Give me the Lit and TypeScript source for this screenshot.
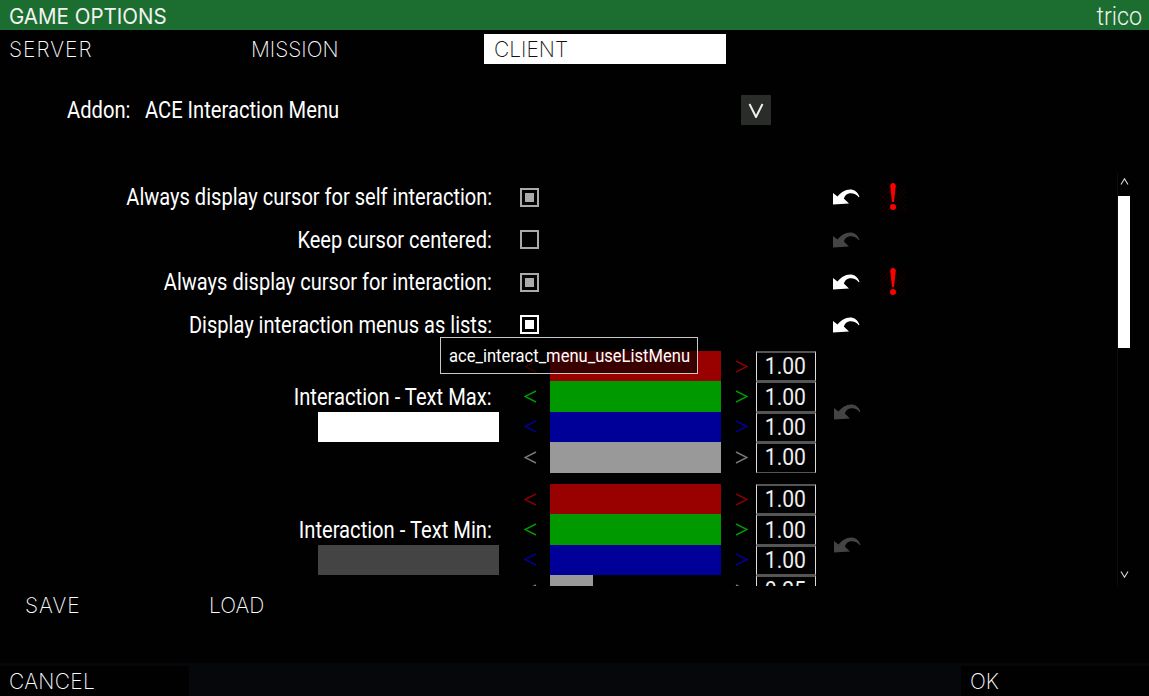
import { LitElement, html, css, svg } from "lit";
import { customElement } from "lit/decorators.js";

const undo = (off: boolean) => html`<svg class="undo ${off ? "off" : ""}" viewBox="0 0 28 16" width="28" height="16"><path d="M1 15.5 L1 4 L5.5 7.5 C9 3.5 13 0.5 18 0.5 C22.5 0.5 26 3 27.5 8 L26.8 8.3 C24.5 5 21 3.8 17.5 4.2 C14.5 4.6 12.8 7 11.8 9.5 L17 14.5 Z" /></svg>`;
const warn = svg`<svg class="warn" viewBox="-8 0 26 28" width="26" height="28"><path d="M2.2 3 C2.2 1 3.5 0 5 0 C6.5 0 7.8 1 7.8 3 L6 19 L4 19 Z" /><circle cx="5" cy="24" r="3" /></svg>`;

const CHECKS: [string, string, boolean][] = [
  ["Always display cursor for self interaction:", "on", true],
  ["Keep cursor centered:", "empty", false],
  ["Always display cursor for interaction:", "on", true],
  ["Display interaction menus as lists:", "hot", false],
];
const CHANNELS = [
  { color: "#990000", dim: "#8a0000" },
  { color: "#009900", dim: "#009900" },
  { color: "#000099", dim: "#000099" },
  { color: "#999999", dim: "#777777" },
];
const GROUPS = [
  { label: "Interaction - Text Max:", swatch: "#ffffff", values: [1, 1, 1, 1] },
  { label: "Interaction - Text Min:", swatch: "#444444", values: [1, 1, 1, 0.25] },
];

@customElement("app-root")
export class AppRoot extends LitElement {
  static styles = css`
    :host { display: block; width: 1149px; height: 696px; background: #010102; color: #fff; overflow: hidden; position: relative; font-family: "Roboto", sans-serif; }
    .page { display: flex; flex-direction: column; height: 696px; }
    .title { height: 30px; flex: none; box-sizing: border-box; padding: 2px 7px 0 9px; background: #1b6e2f; display: flex; justify-content: space-between; align-items: center; font-family: "Inter", sans-serif; font-size: 21.5px; color: #f2f2f2; font-weight: 400; }
    .title .head { display: inline-block; transform: scaleX(0.955); transform-origin: left center; }
    .title .user { font-family: "Roboto", sans-serif; font-weight: 300; font-size: 25px; display: inline-block; transform: scaleX(0.93); transform-origin: right center; }
    .tabs { display: flex; margin-top: 4px; height: 30px; flex: none; }
    .tab { width: 242px; padding: 1px 0 0 9px; box-sizing: border-box; display: flex; align-items: center; font-family: "Inter", sans-serif; font-weight: 200; font-size: 21px; color: #fff; }
    .tab.wide { letter-spacing: 1px; }
    .tab.active { background: #fff; color: #111; padding-left: 10px; }
    .addon { display: flex; align-items: center; height: 30px; margin-top: 31px; flex: none; font-size: 24px; font-weight: 400; }
    .addon .name { margin-left: 67px; width: 78px; }
    .addon .val { width: 596px; }
    .txt { display: inline-block; white-space: nowrap; transform: scaleX(0.84); transform-origin: left center; }
    .combo { width: 30px; height: 30px; background: #2a2c2a; display: flex; align-items: center; justify-content: center; }
    .main { display: flex; margin-top: 51px; height: 410px; flex: none; }
    .list { width: 1117px; overflow: hidden; flex: none; }
    .row { height: 42.5px; display: flex; align-items: center; }
    .lab { width: 492px; text-align: right; font-size: 24px; flex: none; }
    .lab .txt { transform: scaleX(0.835); transform-origin: right center; }
    .box { width: 19px; height: 19px; box-sizing: border-box; border: 2px solid #aaaaaa; margin-left: 28px; flex: none; display: flex; align-items: center; justify-content: center; }
    .box i { width: 9px; height: 9px; background: #aaaaaa; display: block; }
    .box.hot { border-color: #fff; }
    .box.hot i { background: #fff; }
    .gap { width: 321px; flex: none; display: flex; justify-content: flex-end; }
    .undo { fill: #fff; display: block; }
    .undo.off { fill: #444; }
    .warn { fill: #f00; display: block; margin-left: 20px; background: repeating-linear-gradient(135deg, #140000 0 1px, #000 1px 3px); }
    .group { display: grid; grid-template-columns: 510px 40px 171px 35px 60px 62px; grid-auto-rows: 30.4px; }
    .group.first { margin-top: 5px; }
    .group.next { margin-top: 11.4px; }
    .glabel { grid-column: 1; grid-row: 2; padding-right: 18px; text-align: right; font-size: 24px; align-self: center; line-height: 30px; }
    .glabel .txt { transform: scaleX(0.84); transform-origin: right center; }
    .swatch { grid-column: 1; grid-row: 3; margin-left: 318px; width: 181px; height: 30px; }
    .arrow { display: flex; align-items: center; justify-content: center; }
    .arrow.right { padding-left: 5px; }
    .bar { height: 100%; }
    .value { box-sizing: border-box; border-left: 1px solid #ddd; border-right: 1px solid #ddd; border-top: 2px solid #555; border-bottom: 1px solid #555; display: flex; align-items: center; justify-content: center; font-size: 24px; color: #eee; padding: 0 2px 1px 0; }
    .value span { display: inline-block; transform: scaleX(0.88); }
    .gundo { grid-column: 6; grid-row: 1 / span 4; align-self: center; justify-self: start; margin-left: 17px; }
    .scroll { width: 14px; flex: none; display: flex; flex-direction: column; border-left: 1px solid #0d0d0d; box-sizing: border-box; margin-top: -3px; height: 413px; }
    .sb { height: 16px; flex: none; display: flex; align-items: center; justify-content: center; }
    .thumb { height: 152px; width: 12px; background: #fff; margin-top: 7px; flex: none; }
    .sp { flex: 1; }
    .tail { height: 4px; flex: none; }
    .saves { display: flex; height: 37px; flex: none; margin-top: 1px; }
    .btn { font-family: "Inter", sans-serif; font-weight: 200; font-size: 21px; display: flex; align-items: center; color: #fff; }
    .save { width: 184px; padding-left: 25px; box-sizing: border-box; letter-spacing: 1px; }
    .load { width: 198px; padding-left: 25px; box-sizing: border-box; }
    .foot { margin-top: auto; height: 33px; flex: none; display: flex; background: #05070b; }
    .cancel { width: 189px; box-sizing: border-box; padding-left: 9px; background: #010102; margin-top: 3px; letter-spacing: 0.3px; }
    .sp2 { flex: 1; }
    .ok { width: 188px; box-sizing: border-box; padding-left: 9px; background: #010102; margin-top: 3px; }
    .tip { position: absolute; left: 440px; top: 337px; width: 258px; height: 37px; box-sizing: border-box; border: 1px solid #c8c8c8; background: rgba(0,0,0,0.62); display: flex; align-items: center; padding-left: 8px; font-size: 17.5px; }
    .tip span { display: inline-block; white-space: nowrap; transform: scaleX(0.946); transform-origin: left center; }
  `;

  private chevron(dir: "l" | "r", color: string) {
    const d = dir === "l" ? "M12 1 L1 6.5 L12 12" : "M1 1 L12 6.5 L1 12";
    return html`<svg width="13" height="13" viewBox="0 0 13 13" fill="none" stroke=${color} stroke-width="1.4"><path d=${d} /></svg>`;
  }

  private group(g: (typeof GROUPS)[number], i: number) {
    return html`<div class="group ${i === 0 ? "first" : "next"}">
      <div class="glabel"><span class="txt">${g.label}</span></div>
      <div class="swatch" style="background:${g.swatch}"></div>
      ${CHANNELS.map((c, r) => html`
        <div class="arrow" style="grid-column:2;grid-row:${r + 1}">${this.chevron("l", c.dim)}</div>
        <div style="grid-column:3;grid-row:${r + 1}"><div class="bar" style="background:${c.color};width:${g.values[r] * 100}%"></div></div>
        <div class="arrow right" style="grid-column:4;grid-row:${r + 1}">${this.chevron("r", c.dim)}</div>
        <div class="value" style="grid-column:5;grid-row:${r + 1}"><span>${g.values[r].toFixed(2)}</span></div>
      `)}
      <div class="gundo">${undo(true)}</div>
    </div>`;
  }

  render() {
    return html`<div class="page">
      <div class="title"><span class="head">GAME OPTIONS</span><span class="user">trico</span></div>
      <div class="tabs">
        <div class="tab wide"><span>SERVER</span></div>
        <div class="tab"><span>MISSION</span></div>
        <div class="tab active"><span>CLIENT</span></div>
      </div>
      <div class="addon">
        <div class="name"><span class="txt">Addon:</span></div>
        <div class="val"><span class="txt">ACE Interaction Menu</span></div>
        <div class="combo"><svg width="16" height="15" viewBox="0 0 16 15" fill="none" stroke="#eee" stroke-width="2"><path d="M1.5 1 L8 14 L14.5 1" /></svg></div>
      </div>
      <div class="main">
        <div class="list">
          ${CHECKS.map(([label, state, warned]) => html`<div class="row">
            <div class="lab"><span class="txt">${label}</span></div>
            <div class="box ${state}">${state === "empty" ? "" : html`<i></i>`}</div>
            <div class="gap">${undo(state === "empty")}</div>
            ${warned ? warn : ""}
          </div>`)}
          ${GROUPS.map((g, i) => this.group(g, i))}
        </div>
        <div class="scroll">
          <div class="sb"><svg width="9" height="7" viewBox="0 0 9 7" fill="none" stroke="#ddd" stroke-width="1.1"><path d="M1 6.5 L4.5 0.8 L8 6.5" /></svg></div>
          <div class="thumb"></div>
          <div class="sp"></div>
          <div class="sb"><svg width="9" height="7" viewBox="0 0 9 7" fill="none" stroke="#ddd" stroke-width="1.1"><path d="M1 0.5 L4.5 6.2 L8 0.5" /></svg></div>
          <div class="tail"></div>
        </div>
      </div>
      <div class="saves">
        <div class="btn save">SAVE</div>
        <div class="btn load">LOAD</div>
      </div>
      <div class="foot">
        <div class="btn cancel">CANCEL</div>
        <div class="sp2"></div>
        <div class="btn ok">OK</div>
      </div>
    </div>
    <div class="tip"><span>ace_interact_menu_useListMenu</span></div>`;
  }
}
